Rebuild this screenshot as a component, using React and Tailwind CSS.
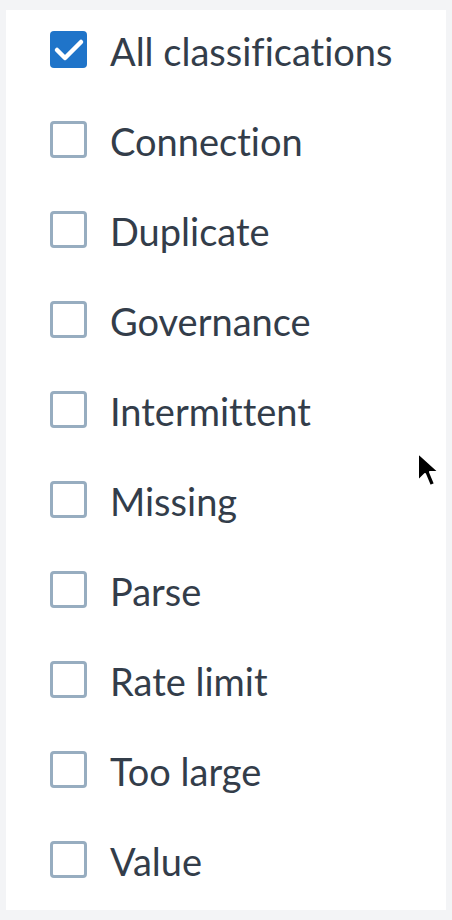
import React, { useState } from "react";

const items = [
    "All classifications",
    "Connection",
    "Duplicate",
    "Governance",
    "Intermittent",
    "Missing",
    "Parse",
    "Rate limit",
    "Too large",
    "Value",
];

const Checkbox = ({ checked }) =>
    checked ? (
        <span className="flex h-[37px] w-[37px] shrink-0 items-center justify-center rounded-[4px] bg-[#1f74c9]">
            <svg width="37" height="37" viewBox="0 0 37 37" fill="none">
                <path
                    d="M7 19 L15 27 L31 11"
                    stroke="white"
                    strokeWidth="4.5"
                    strokeLinecap="round"
                    strokeLinejoin="round"
                />
            </svg>
        </span>
    ) : (
        <span className="block h-[37px] w-[37px] shrink-0 rounded-[4px] border-[3px] border-[#97adc0] bg-white" />
    );

const App = () => {
    const [selected, setSelected] = useState(["All classifications"]);

    const toggle = (name) => {
        setSelected((prev) =>
            prev.includes(name) ? prev.filter((n) => n !== name) : [...prev, name]
        );
    };

    return (
        <div className="relative h-[920px] w-[452px] bg-[#f3f4f6] px-[6px] pt-[10px]">
            <div className="h-[900px] w-[440px] bg-white pl-[44px] pt-[21px]">
                <ul className="flex flex-col gap-[53px]">
                    {items.map((name) => (
                        <li
                            key={name}
                            onClick={() => toggle(name)}
                            className="flex h-[37px] cursor-pointer items-center gap-[23px]"
                        >
                            <Checkbox checked={selected.includes(name)} />
                            <span className="mt-[3px] font-['Lato',sans-serif] text-[38px] leading-none text-[#333d4a] [font-variant-ligatures:none]">
                                {name}
                            </span>
                        </li>
                    ))}
                </ul>
            </div>

            {/* mouse pointer */}
            <svg
                className="absolute left-[416px] top-[451px]"
                width="26"
                height="38"
                viewBox="0 0 26 38"
            >
                <path
                    d="M2 2 L2 30 L9 23 L14 35 L19 33 L14 21 L23 21 Z"
                    fill="black"
                    stroke="white"
                    strokeWidth="2"
                    strokeLinejoin="round"
                />
            </svg>
        </div>
    );
};

export default App;
